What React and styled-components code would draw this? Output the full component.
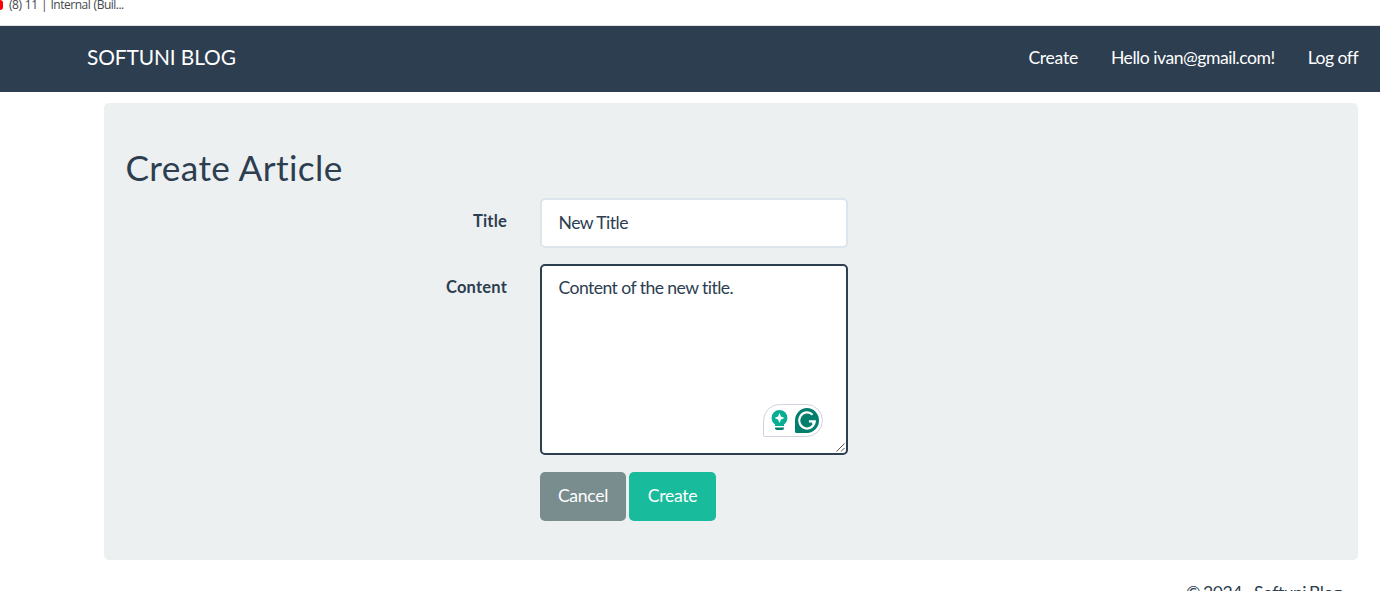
import React from "react";
import styled, { createGlobalStyle } from "styled-components";

const GlobalStyle = createGlobalStyle`
  *, *::before, *::after { box-sizing: border-box; }
  body {
    margin: 0;
    background: #fff;
    color: #2c3e50;
    font: 17.6px/24px Lato, "Liberation Sans", sans-serif;
    overflow: hidden;
  }
`;

const Page = styled.div`
  height: 591px;
  display: flex;
  flex-direction: column;
  overflow: hidden;
`;

const BookmarksBar = styled.div`
  flex: none;
  height: 26px;
  display: flex;
  align-items: flex-start;
  border-bottom: 1px solid #dfe3e5;
  color: #45484d;
  font: 12px/16px "Open Sans", "Noto Sans", sans-serif;
  overflow: hidden;
`;

const Favicon = styled.span`
  flex: none;
  width: 3px;
  height: 10px;
  border-radius: 0 3px 3px 0;
  background: #f00;
`;

const BookmarkTitle = styled.span`
  margin: -3px 0 0 6px;
  white-space: nowrap;
  letter-spacing: -0.5px;
  word-spacing: 0.8px;
`;

const Navbar = styled.nav`
  flex: none;
  height: 66px;
  padding: 0 22px 0 87px;
  display: flex;
  align-items: center;
  justify-content: space-between;
  background: #2c3e50;
  color: #fff;
`;

const Brand = styled.a`
  font-size: 20.9px;
  letter-spacing: -0.12px;
  margin-top: -5px;
`;

const NavLinks = styled.div`
  display: flex;
  gap: 33px;
  margin-top: -3px;
`;

const NavLink = styled.a`
  white-space: nowrap;
  letter-spacing: ${(p) => p.$spacing || 0}px;
`;

const Well = styled.main`
  flex: none;
  height: 457px;
  margin: 11px 22px 0 104px;
  padding: 45px 22px 0 21.5px;
  border-radius: 5px;
  background: #ecf0f1;
`;

const Heading = styled.h2`
  margin: 0 0 11px;
  font-size: 35.2px;
  font-weight: 400;
  line-height: 39px;
  letter-spacing: 0.4px;
`;

const FormRow = styled.div`
  display: grid;
  grid-template-columns: 381.5px 308px;
  column-gap: 33px;
  margin-bottom: ${(p) => p.$gap || 16}px;
`;

const Label = styled.label`
  padding-top: 11px;
  text-align: right;
  font-size: 16.5px;
  font-weight: 700;
  letter-spacing: 0.2px;
`;

const TextInput = styled.input`
  width: 100%;
  height: 50px;
  padding: 0 16.5px 2px;
  border: 2px solid #dce4ec;
  border-radius: 5px;
  outline: none;
  background: #fff;
  color: #2c3e50;
  font: inherit;
  letter-spacing: -0.52px;
`;

const ContentField = styled.div`
  position: relative;
  height: 191px;
`;

const TextArea = styled.textarea`
  display: block;
  width: 100%;
  height: 100%;
  padding: 10px 16.5px;
  border: 2px solid #2c3e50;
  border-radius: 5px;
  outline: none;
  resize: none;
  background: #fff;
  color: #2c3e50;
  font: inherit;
  letter-spacing: -0.57px;
`;

const AssistantBadge = styled.div`
  position: absolute;
  right: 25px;
  bottom: 18px;
  width: 60px;
  height: 33px;
  padding: 0 3px 1px 7px;
  display: flex;
  align-items: center;
  justify-content: space-between;
  border: 1px solid #d0d1e0;
  border-radius: 17px 17px 17px 2px;
  background: #fff;
`;

const ResizeGrip = styled.svg`
  position: absolute;
  right: 3px;
  bottom: 3px;
`;

const Actions = styled.div`
  grid-column: 2;
  display: flex;
  gap: 3px;
`;

const Button = styled.button`
  width: ${(p) => p.$width}px;
  height: 49px;
  padding: 0 0 2px;
  border: 0;
  border-radius: 5px;
  background: ${(p) => p.$color};
  color: #fff;
  font: inherit;
  letter-spacing: -0.3px;
`;

const Footer = styled.footer`
  flex: none;
  margin: 21px 38.5px 0 0;
  text-align: right;
  letter-spacing: -0.5px;
  word-spacing: -1px;
`;

function BulbIcon() {
  return (
    <svg width="17" height="22" viewBox="0 0 17 22">
      <path d="M8.500 1A7.900 7.900 0 0 0 .600 8.900C.600 11.600 2 14 4 15.600V17h9v-1.400c2-1.600 3.400-4 3.400-6.700A7.900 7.900 0 0 0 8.500 1Z" fill="#06ae94" />
      <path d="M8.500 4 10 7.500 13.500 9 10 10.500 8.500 14 7 10.500 3.500 9 7 7.500Z" fill="#fff" />
      <path d="M4 18.500h9v.700a1.800 1.800 0 0 1-1.800 1.800H5.800A1.800 1.800 0 0 1 4 19.200Z" fill="#027e6f" />
    </svg>
  );
}

function AssistantLogo() {
  return (
    <svg width="24" height="25" viewBox="0 0 25 25" preserveAspectRatio="none">
      <path d="M12.500 0A12.500 12.500 0 0 1 12.500 25H1.500A1.500 1.500 0 0 1 0 23.500V12.500A12.500 12.500 0 0 1 12.500 0Z" fill="#027e6f" />
      <path d="M18.300 6.700A8.100 8.100 0 1 0 20.600 13.400H14.500M20.600 13.400 18.300 16" fill="none" stroke="#fff" strokeWidth="2.200" />
    </svg>
  );
}

export default function App() {
  return (
    <Page>
      <GlobalStyle />
      <BookmarksBar>
        <Favicon />
        <BookmarkTitle>(8) 11 | Internal (Buil...</BookmarkTitle>
      </BookmarksBar>
      <Navbar>
        <Brand>SOFTUNI BLOG</Brand>
        <NavLinks>
          <NavLink $spacing={-0.3}>Create</NavLink>
          <NavLink $spacing={-0.48}>Hello ivan@gmail.com!</NavLink>
          <NavLink $spacing={-0.55}>Log off</NavLink>
        </NavLinks>
      </Navbar>
      <Well>
        <Heading>Create Article</Heading>
        <FormRow>
          <Label htmlFor="title">Title</Label>
          <TextInput id="title" defaultValue="New Title" />
        </FormRow>
        <FormRow $gap={17}>
          <Label htmlFor="content">Content</Label>
          <ContentField>
            <TextArea id="content" defaultValue="Content of the new title." spellCheck={false} />
            <AssistantBadge>
              <BulbIcon />
              <AssistantLogo />
            </AssistantBadge>
            <ResizeGrip width="9" height="9" viewBox="0 0 9 9">
              <path d="M.5 8.500 8.500.500M5 8.500 8.500 5" stroke="#555" fill="none" />
            </ResizeGrip>
          </ContentField>
        </FormRow>
        <FormRow>
          <Actions>
            <Button $width={86} $color="#798d8f">Cancel</Button>
            <Button $width={87} $color="#18bc9c">Create</Button>
          </Actions>
        </FormRow>
      </Well>
      <Footer>© 2024 - Softuni Blog</Footer>
    </Page>
  );
}
